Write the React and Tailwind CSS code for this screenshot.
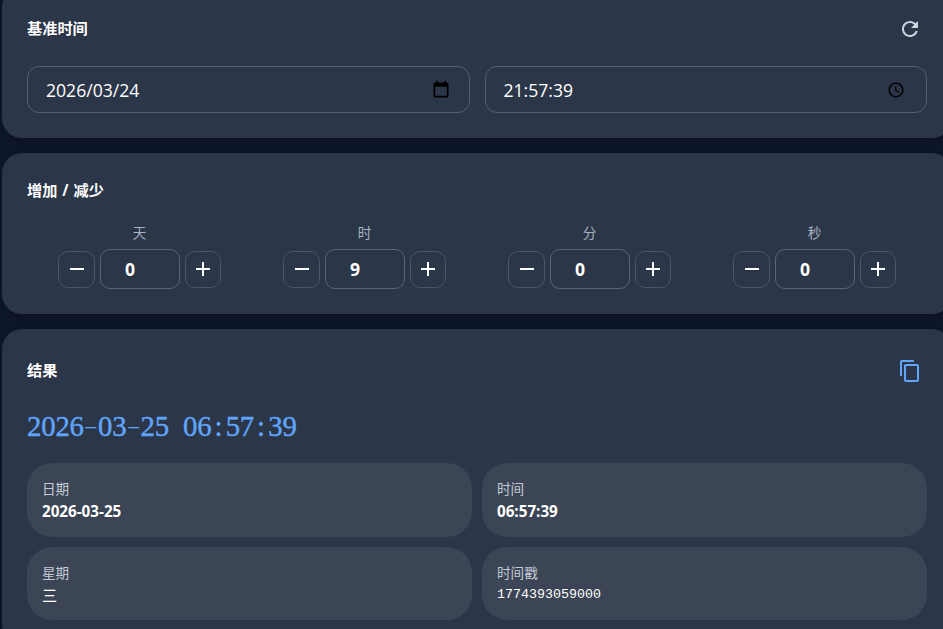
const cjk = { fontFamily: '"Open Sans", "Noto Sans CJK SC", sans-serif' };

function Calendar() {
  return (
    <svg width="20" height="20" viewBox="0 0 24 24" className="block">
      <path fill="#000" d="M19 3h-1V1h-2v2H8V1H6v2H5C3.9 3 3 3.9 3 5v14c0 1.1.9 2 2 2h14c1.1 0 2-.9 2-2V5c0-1.1-.9-2-2-2zm0 16H5V8h14v11z" />
    </svg>
  );
}

function Clock() {
  return (
    <svg width="20" height="20" viewBox="0 0 24 24" className="block">
      <path fill="#000" d="M11.99 3C7.02 3 3 7.03 3 12s4.02 9 8.99 9C16.97 21 21 16.97 21 12s-4.03-9-9.01-9zM12 19.2c-3.98 0-7.2-3.22-7.2-7.2S8.02 4.8 12 4.8s7.2 3.22 7.2 7.2-3.22 7.2-7.2 7.2z" />
      <path fill="#000" d="M12.4 7.5h-1.4v5.4l4.7 2.8.7-1.2-4-2.4z" />
    </svg>
  );
}

function Refresh() {
  return (
    <svg width="24" height="24" viewBox="0 0 24 24" className="block">
      <path fill="#cbd5e0" d="M17.65 6.35C16.2 4.9 14.21 4 12 4c-4.42 0-7.99 3.58-7.99 8s3.57 8 7.99 8c3.73 0 6.84-2.55 7.73-6h-2.08c-.82 2.33-3.04 4-5.65 4-3.31 0-6-2.69-6-6s2.69-6 6-6c1.66 0 3.14.69 4.22 1.78L13 11h7V4l-2.35 2.35z" />
    </svg>
  );
}

function Copy() {
  return (
    <svg width="24" height="24" viewBox="0 0 24 24" className="block">
      <path fill="#60a5fa" d="M16 1H4c-1.1 0-2 .9-2 2v14h2V3h12V1zm3 4H8c-1.1 0-2 .9-2 2v14c0 1.1.9 2 2 2h11c1.1 0 2-.9 2-2V7c0-1.1-.9-2-2-2zm0 16H8V7h11v14z" />
    </svg>
  );
}

function Stepper({ label, value }) {
  return (
    <div className="flex flex-col items-center">
      <div className="text-[13.6px] leading-[20px] text-[#a9b2c0] mb-[6px]">{label}</div>
      <div className="flex items-center gap-[5px]">
        <button className="w-[37px] h-[37px] rounded-[10px] border border-[#4a5568] flex items-center justify-center">
          <svg width="24" height="24" viewBox="0 0 24 24"><path fill="#fff" d="M19 13H5v-2h14v2z" /></svg>
        </button>
        <div className="w-[80px] h-[40px] rounded-[10px] border border-[#5a6578] flex items-center justify-center text-[17.6px] font-bold text-white pr-[20px]">{value}</div>
        <button className="w-[36px] h-[37px] rounded-[10px] border border-[#4a5568] flex items-center justify-center">
          <svg width="24" height="24" viewBox="0 0 24 24"><path fill="#fff" d="M19 13h-6v6h-2v-6H5v-2h6V5h2v6h6v2z" /></svg>
        </button>
      </div>
    </div>
  );
}

function Info({ label, tall, children }) {
  return (
    <div className={tall ? "rounded-[25px] bg-[#3b4555] px-[15px] pt-[16px] h-[74px]" : "rounded-[25px] bg-[#3b4555] px-[15px] pt-[16px] h-[73px]"}>
      <div className="text-[13.6px] leading-[20px] text-[#c3cad5]">{label}</div>
      <div className="mt-[2px] text-white">{children}</div>
    </div>
  );
}

function Big({ text }) {
  return (
    <div className="text-[28.8px] leading-[36px] text-[#60a5fa] mt-[20px] [-webkit-text-stroke:0.4px_#60a5fa]" style={{ fontFamily: '"Liberation Serif", serif' }}>
      {text.split("").map((c, i) =>
        c === "-" ? (
          <span key={i} className="inline-block w-[9.6px] mx-[2.3px] text-center [-webkit-text-stroke:0] scale-x-[1.45] scale-y-[0.6]">{c}</span>
        ) : (
          <span key={i} className="inline-block w-[14.2px] text-center">{c === " " ? "\u00a0" : c}</span>
        )
      )}
    </div>
  );
}

export default function App() {
  return (
    <div className="w-[943px] h-[629px] overflow-hidden bg-[#0e172b]" style={cjk}>
      <div className="w-[950px] ml-[2px] -mt-[13px] flex flex-col gap-[15px]">
        <section className="h-[151px] rounded-[20px] bg-[#2b3648] shadow-[0_4px_12px_rgba(0,0,0,0.25)] px-[25px] pt-[25px]">
          <div className="flex items-center justify-between h-[34px] pr-[5px]">
            <h2 className="text-[15.2px] leading-[24px] -mt-[2px] font-bold text-white">基准时间</h2>
            <Refresh />
          </div>
          <div className="mt-[20px] grid grid-cols-2 gap-[15px]">
            <div className="h-[47px] rounded-[12px] border border-[#566073] flex items-center justify-between pl-[18px] pr-[18px] text-[17.6px] text-white">
              <span className="pt-[2px]">2026/03/24</span>
              <Calendar />
            </div>
            <div className="h-[47px] rounded-[12px] border border-[#566073] flex items-center justify-between pl-[18px] pr-[20px] text-[17.6px] text-white">
              <span className="pt-[1px]">21:57:39</span>
              <Clock />
            </div>
          </div>
        </section>

        <section className="h-[161px] rounded-[20px] bg-[#2b3648] shadow-[0_4px_12px_rgba(0,0,0,0.25)] px-[25px] pt-[25px]">
          <h2 className="text-[15.2px] leading-[24px] font-bold text-white [word-spacing:1px]">增加 / 减少</h2>
          <div className="mt-[21px] grid grid-cols-4 w-[900px]">
            <Stepper label="天" value="0" />
            <Stepper label="时" value="9" />
            <Stepper label="分" value="0" />
            <Stepper label="秒" value="0" />
          </div>
        </section>

        <section className="rounded-[20px] bg-[#2b3648] shadow-[0_4px_12px_rgba(0,0,0,0.25)] px-[25px] pt-[25px] pb-[25px]">
          <div className="flex items-center justify-between h-[34px] pr-[5px]">
            <h2 className="text-[15.2px] leading-[24px] -mt-[2px] font-bold text-white">结果</h2>
            <Copy />
          </div>
          <Big text="2026-03-25 06:57:39" />
          <div className="mt-[19px] grid grid-cols-2 gap-[10px] w-[900px]">
            <Info tall label="日期"><span className="text-[15.2px] font-bold leading-[20px] block">2026-03-25</span></Info>
            <Info tall label="时间"><span className="text-[15.2px] font-bold leading-[20px] block">06:57:39</span></Info>
            <Info label="星期"><span className="text-[15.2px] leading-[20px] block">三</span></Info>
            <Info label="时间戳"><span className="text-[13.33px] leading-[20px] block" style={{ fontFamily: '"Liberation Mono", monospace' }}>1774393059000</span></Info>
          </div>
        </section>
      </div>
    </div>
  );
}
